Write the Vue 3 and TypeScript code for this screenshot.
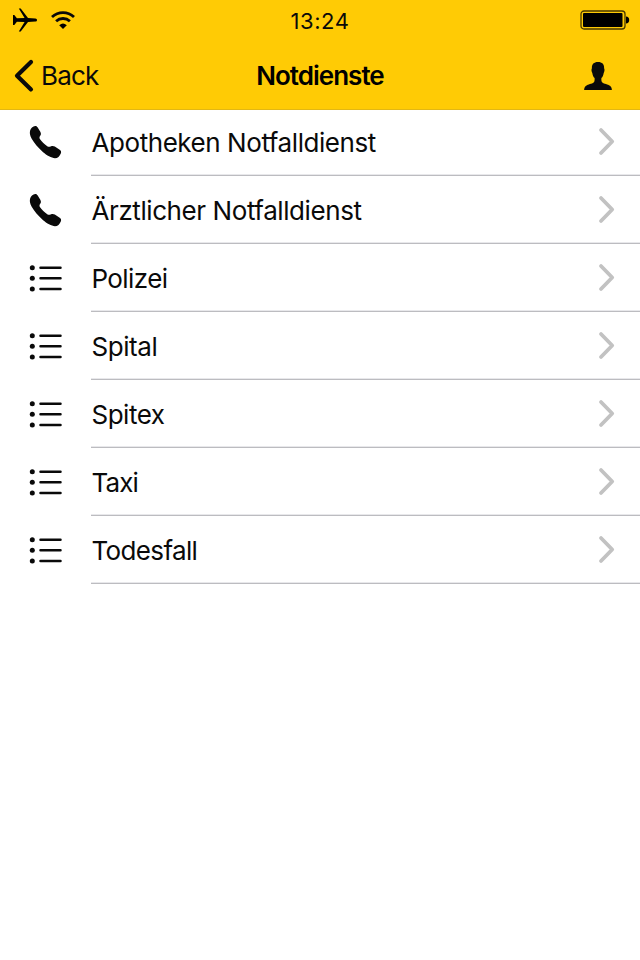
<script setup lang="ts">
type IconKind = 'phone' | 'list'

interface ServiceEntry {
  label: string
  icon: IconKind
  tracking: number
}

const services: ServiceEntry[] = [
  { label: 'Apotheken Notfalldienst', icon: 'phone', tracking: -0.44 },
  { label: 'Ärztlicher Notfalldienst', icon: 'phone', tracking: -0.42 },
  { label: 'Polizei', icon: 'list', tracking: -0.6 },
  { label: 'Spital', icon: 'list', tracking: -0.45 },
  { label: 'Spitex', icon: 'list', tracking: -0.5 },
  { label: 'Taxi', icon: 'list', tracking: -0.9 },
  { label: 'Todesfall', icon: 'list', tracking: -0.65 },
]
</script>

<template>
  <main class="screen">
    <header class="header">
      <div class="status-bar">
        <div class="status-left">
          <svg class="plane" width="26" height="24" viewBox="0 0 26 24" aria-hidden="true">
            <path d="M1 7h1.300l2.600 3.300 7.700-.4L6.800.5h1.900l7.300 9.500 7.300.4c2.300.2 2.300 3 0 3.200l-7.300.4L8.700 23.500H6.800l5.800-9.400-7.700-.4L2.300 17H1z" />
          </svg>
          <svg class="wifi" width="24" height="18" viewBox="0 0 24 18" aria-hidden="true">
            <path class="wave" d="M1 6.100Q5.700 1.600 12 1.600T23 6.100M5.100 10.200Q8 7.500 12 7.500T18.900 10.200" />
            <path d="M12 18L8.200 14.200q3.800-3.400 7.600 0z" />
          </svg>
        </div>
        <time class="clock">13:24</time>
        <svg class="battery" width="50" height="20" viewBox="0 0 50 20" aria-hidden="true">
          <rect class="shell" x="1" y="1" width="44" height="18" rx="3" />
          <rect x="3" y="3" width="39.500" height="14" rx="1" />
          <path d="M46 6.500q3.200.4 3.200 3.500T46 13.500z" />
        </svg>
      </div>
      <nav class="nav-bar">
        <button class="back" type="button">
          <svg width="22" height="34" viewBox="0 0 22 34" aria-hidden="true">
            <path d="M18 3L4 16.700l14 13.700" />
          </svg>
          <span>Back</span>
        </button>
        <h1 class="title">Notdienste</h1>
        <button class="profile" type="button" aria-label="Profil">
          <svg width="28" height="28" viewBox="0 0 28 28" aria-hidden="true">
            <path d="M14 0c4.200 0 6.200 2.200 6.100 6.300.7 1 .5 3.400-.4 4.600-.3 2.300-1.100 4-2.300 5.200-.1 1.800 0 3.100.5 4 .9 1.600 4.900 2 7.100 3.200 1.900.9 2.700 2.300 2.900 4.600H.1c.2-2.300 1-3.700 2.900-4.600 2.200-1.200 6.200-1.600 7.100-3.200.5-.9.6-2.200.5-4-1.200-1.200-2-2.900-2.300-5.200-.9-1.200-1.100-3.600-.4-4.600C7.800 2.200 9.800 0 14 0z" />
          </svg>
        </button>
      </nav>
    </header>

    <ul class="services">
      <li v-for="service in services" :key="service.label" class="service">
        <svg v-if="service.icon === 'phone'" class="icon" width="34" height="34" viewBox="0 0 34 34" aria-hidden="true">
          <path d="M1 6C1.600 3.200 4 1.200 6.200 1c1.200-.1 1.900.6 2.500 1.500l2.600 4.200c.9 1.600.8 2.900-.1 4-.8 1.200-1 2.200-.3 3.400 1.900 2.900 4.600 5.500 7.700 7.400 1.300.7 2.300.2 3.500-.3 1.300-.5 2.500-.4 3.700.3l4.900 3.300c1.400 1 1.700 2.100 1.200 3.400-1.200 3-3.200 5-5.900 5-3.600-.1-8.300-2.900-11.900-5.900C9.100 22.700 5.200 18.200 2.700 13.800 1.200 10.900.5 8.600 1 6z" />
        </svg>
        <svg v-else class="icon" width="34" height="34" viewBox="0 0 34 34" aria-hidden="true">
          <g>
            <circle cx="3.300" cy="6.700" r="2.500" />
            <circle cx="3.300" cy="17.300" r="2.500" />
            <circle cx="3.300" cy="27.900" r="2.500" />
          </g>
          <path class="lines" d="M11.500 6.700h20M11.500 17.300h20M11.500 27.900h20" />
        </svg>
        <div class="row">
          <span class="label" :style="{ letterSpacing: `${service.tracking}px` }">{{ service.label }}</span>
          <svg class="chevron" width="20" height="30" viewBox="0 0 20 30" aria-hidden="true">
            <path d="M4 3L15.200 14.500 4 26" />
          </svg>
        </div>
      </li>
    </ul>
  </main>
</template>

<style>
body {
  background: #fff;
}
</style>

<style scoped>
.screen {
  width: 640px;
  height: 960px;
  overflow: hidden;
  background: #fff;
  color: #0a0a0a;
  font-family: Inter, "Liberation Sans", sans-serif;
}

.header {
  position: relative;
  z-index: 1;
  box-sizing: border-box;
  height: 110px;
  margin-bottom: -2px;
  border-bottom: 1px solid #e2b714;
  background: #ffcb05;
}

.status-bar {
  display: grid;
  grid-template-columns: 1fr auto 1fr;
  align-items: center;
  box-sizing: border-box;
  height: 42px;
  padding: 1px 10px 0 12px;
}

.status-left {
  display: flex;
  align-items: center;
  gap: 13px;
}

.plane {
  margin-top: -3px;
}

.wifi {
  margin-top: -4px;
}

.clock {
  font-size: 22px;
  line-height: 38px;
  letter-spacing: 0.6px;
  margin: 0 2px 2px 0;
}

.wave {
  fill: none;
  stroke: #0a0a0a;
  stroke-width: 2.8;
}

.battery {
  justify-self: end;
  margin-top: -3px;
}

.shell {
  fill: none;
  stroke: #4a3a00;
  stroke-width: 1.3;
}

.nav-bar {
  display: grid;
  grid-template-columns: 1fr auto 1fr;
  align-items: center;
  height: 68px;
  padding: 0 13px;
  box-sizing: border-box;
}

button {
  display: flex;
  align-items: center;
  padding: 0;
  border: 0;
  background: none;
  color: inherit;
  font: inherit;
}

.back {
  gap: 6px;
  font-size: 26px;
  line-height: 34px;
  letter-spacing: -0.8px;
}

.back path {
  fill: none;
  stroke: #0a0a0a;
  stroke-width: 4.2;
  stroke-linecap: round;
  stroke-linejoin: round;
}

.title {
  margin: 0;
  font-size: 26px;
  line-height: 34px;
  font-weight: 600;
  letter-spacing: -1px;
  color: #000;
}

.profile {
  justify-self: end;
  margin-right: 15px;
}

.profile svg {
  fill: #0a0a0a;
}

.services {
  margin: 0;
  padding: 0;
  list-style: none;
}

.service {
  display: flex;
  align-items: center;
  height: 68px;
  padding-left: 29px;
}

.icon {
  flex: none;
  margin-right: 28px;
  fill: #0a0a0a;
}

.lines {
  fill: none;
  stroke: #0a0a0a;
  stroke-width: 2.5;
  stroke-linecap: round;
}

.row {
  box-sizing: border-box;
  display: flex;
  flex: 1;
  align-items: center;
  justify-content: space-between;
  height: 68px;
  padding-right: 23px;
  border-bottom: 1px solid #bcbcc0;
  box-shadow: inset 0 -1px #e8e8eb;
}

.label {
  font-size: 26px;
  line-height: 34px;
  padding: 2px 0 0 0.5px;
}

.chevron path {
  fill: none;
  stroke: #c2c2c2;
  stroke-width: 3.8;
  stroke-linecap: round;
  stroke-linejoin: round;
}
</style>
